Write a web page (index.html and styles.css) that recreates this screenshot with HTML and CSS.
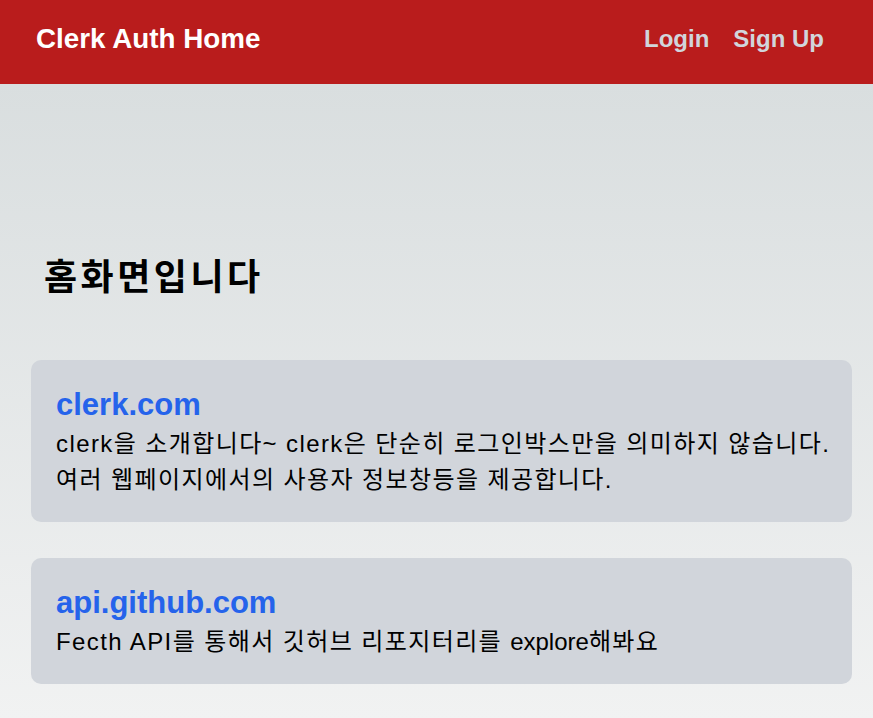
FILE: index.html
```html
<!DOCTYPE html>
<html lang="ko">
<head>
<meta charset="utf-8">
<title>Clerk Auth Home</title>
<link rel="stylesheet" href="styles.css">
</head>
<body>
<header class="topbar">
  <a class="brand" href="#">Clerk Auth Home</a>
  <nav class="nav">
    <a class="nav-link" href="#">Login</a>
    <a class="nav-link" href="#">Sign Up</a>
  </nav>
</header>
<main class="main">
  <h1 class="page-title">홈화면입니다</h1>
  <section class="card">
    <a class="card-title" href="#">clerk.com</a>
    <p class="card-text">clerk을 소개합니다~ clerk은 단순히 로그인박스만을 의미하지 않습니다. 여러 웹페이지에서의 사용자 정보창등을 제공합니다.</p>
  </section>
  <section class="card">
    <a class="card-title" href="#">api.github.com</a>
    <p class="card-text">Fecth API를 통해서 깃허브 리포지터리를 <span class="latin">explore</span>해봐요</p>
  </section>
</main>
</body>
</html>
```
FILE: styles.css
```css
* { box-sizing: border-box; }
html, body { margin: 0; padding: 0; }
body {
  font-family: "Liberation Sans", "Noto Sans CJK KR", sans-serif;
  min-height: 718px;
  background: linear-gradient(to bottom, #d9dedf 84px, #f1f2f2 100%);
  color: #000;
}
.topbar {
  height: 84px;
  background: #b91c1c;
  display: flex;
  align-items: center;
  justify-content: space-between;
  padding: 0 49px 0 36px;
}
.brand {
  color: #fff;
  font-weight: 700;
  font-size: 27.8px;
  text-decoration: none;
  margin-top: -6px;
}
.nav { display: flex; gap: 24px; margin-top: -6px; }
.nav-link {
  color: #d1d5db;
  font-weight: 700;
  font-size: 24px;
  text-decoration: none;
}
.main {
  padding: 170px 21px 35px 31px;
  display: flex;
  flex-direction: column;
  gap: 36px;
}
.page-title {
  margin: 0 0 30px;
  padding-left: 13px;
  font-family: "Noto Sans CJK KR", sans-serif;
  font-size: 36px;
  line-height: 40px;
  font-weight: 700;
  letter-spacing: 3.5px;
}
.card {
  background: #d1d5db;
  border-radius: 10px;
  padding: 24px 16px 24px 25px;
  display: flex;
  flex-direction: column;
}
.card-title {
  color: #2563eb;
  font-weight: 700;
  font-size: 31px;
  line-height: 42px;
  text-decoration: none;
}
.card-text {
  margin: 0;
  font-size: 24px;
  line-height: 36px;
  letter-spacing: 1.4px;
}
.latin { letter-spacing: 0; }
```
